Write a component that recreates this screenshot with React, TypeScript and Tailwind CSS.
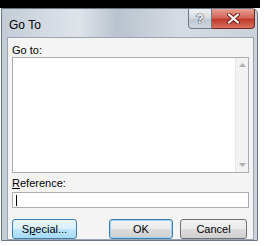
import React from "react";

function HelpGlyph() {
  return (
    <span className="text-[13px] font-bold leading-none text-white [text-shadow:0_0_1px_#2b3440,0_0_1px_#2b3440,0_0_1px_#2b3440]">
      ?
    </span>
  );
}

function CloseGlyph() {
  return (
    <svg width="13" height="11" viewBox="0 0 13 11">
      <path d="M2 1.5 L11 9.5 M11 1.5 L2 9.5" stroke="#6b1d14" strokeWidth="4" strokeLinecap="round" />
      <path d="M2 1.5 L11 9.5 M11 1.5 L2 9.5" stroke="#ffffff" strokeWidth="2.2" strokeLinecap="round" />
    </svg>
  );
}

export default function App() {
  return (
    <div
      className="w-[265px] h-[246px] bg-white overflow-hidden flex flex-col"
      style={{ fontFamily: '"Liberation Sans", Arial, sans-serif' }}
    >
      {/* black strip above the window */}
      <div className="h-[8px] w-[260px] bg-black shrink-0" />

      {/* window frame */}
      <div className="ml-[1px] w-[257px] h-[233px] rounded-tr-[6px] border border-[#6b7684] bg-[linear-gradient(90deg,#c3ccd6_0%,#dfe4ea_30%,#b9c2cd_45%,#d6dce3_70%,#c9d1da_100%)] flex flex-col">
        {/* title bar */}
        <div className="h-[28px] flex items-start shrink-0">
          <div className="pl-[7px] pt-[10px] text-[12px] text-black leading-none">Go To</div>
          <div className="ml-auto flex">
            <div className="w-[24px] h-[20px] flex items-center justify-center rounded-bl-[4px] border border-t-0 border-[#6d7885] bg-[linear-gradient(180deg,#eef1f4_0%,#d3d9e0_50%,#bfc7d1_51%,#cfd6de_100%)]">
              <HelpGlyph />
            </div>
            <div className="w-[43px] h-[20px] mr-[2px] flex items-center justify-center rounded-br-[4px] border border-t-0 border-l-0 border-[#6e2a22] bg-[linear-gradient(180deg,#e8a193_0%,#d4675a_45%,#c13a2b_55%,#d8705f_100%)]">
              <CloseGlyph />
            </div>
          </div>
        </div>

        {/* client area */}
        <div className="ml-[5px] w-[247px] flex-1 mb-[1px] bg-[#f4f4f4] border border-[#9aa5b1] flex flex-col px-[4px] pt-[6px] text-[11px] text-black">
          <div className="h-[13px] flex items-center">Go to:</div>
          <div className="h-[116px] bg-white border border-[#abadb3] flex justify-end">
            <div className="w-[13px] bg-[#f2f2f2] border-l border-[#e6e6e6] flex flex-col items-center justify-between py-[5px]">
              <svg width="7" height="4" viewBox="0 0 7 4">
                <path d="M0 4 L3.5 0 L7 4 Z" fill="#b0b0b0" />
              </svg>
              <svg width="7" height="4" viewBox="0 0 7 4">
                <path d="M0 0 L3.5 4 L7 0 Z" fill="#b0b0b0" />
              </svg>
            </div>
          </div>
          <div className="mt-[3px] h-[14px] flex items-center">
            <span className="underline">R</span>eference:
          </div>
          <div className="mt-[2px] h-[16px] bg-white border border-[#abadb3] flex items-center pl-[3px]">
            <div className="w-[1px] h-[11px] bg-black" />
          </div>
          <div className="mt-[11px] flex h-[20px]">
            <button className="w-[65px] h-[20px] rounded-[3px] border border-[#3c7fb1] bg-[linear-gradient(180deg,#eaf6fd_0%,#d9f0fc_50%,#bee6fd_51%,#a7d9f5_100%)] text-[11px] leading-none">
              S<span className="underline">p</span>ecial...
            </button>
            <button className="ml-[32px] w-[64px] h-[20px] rounded-[3px] border border-[#3c7fb1] bg-[linear-gradient(180deg,#f2f2f2_0%,#ebebeb_50%,#dddddd_51%,#cfcfcf_100%)] text-[11px] leading-none shadow-[inset_0_0_0_1px_#9fd2f0]">
              OK
            </button>
            <button className="ml-[7px] w-[67px] h-[20px] rounded-[3px] border border-[#707070] bg-[linear-gradient(180deg,#f2f2f2_0%,#ebebeb_50%,#dddddd_51%,#cfcfcf_100%)] text-[11px] leading-none">
              Cancel
            </button>
          </div>
        </div>
      </div>
    </div>
  );
}
